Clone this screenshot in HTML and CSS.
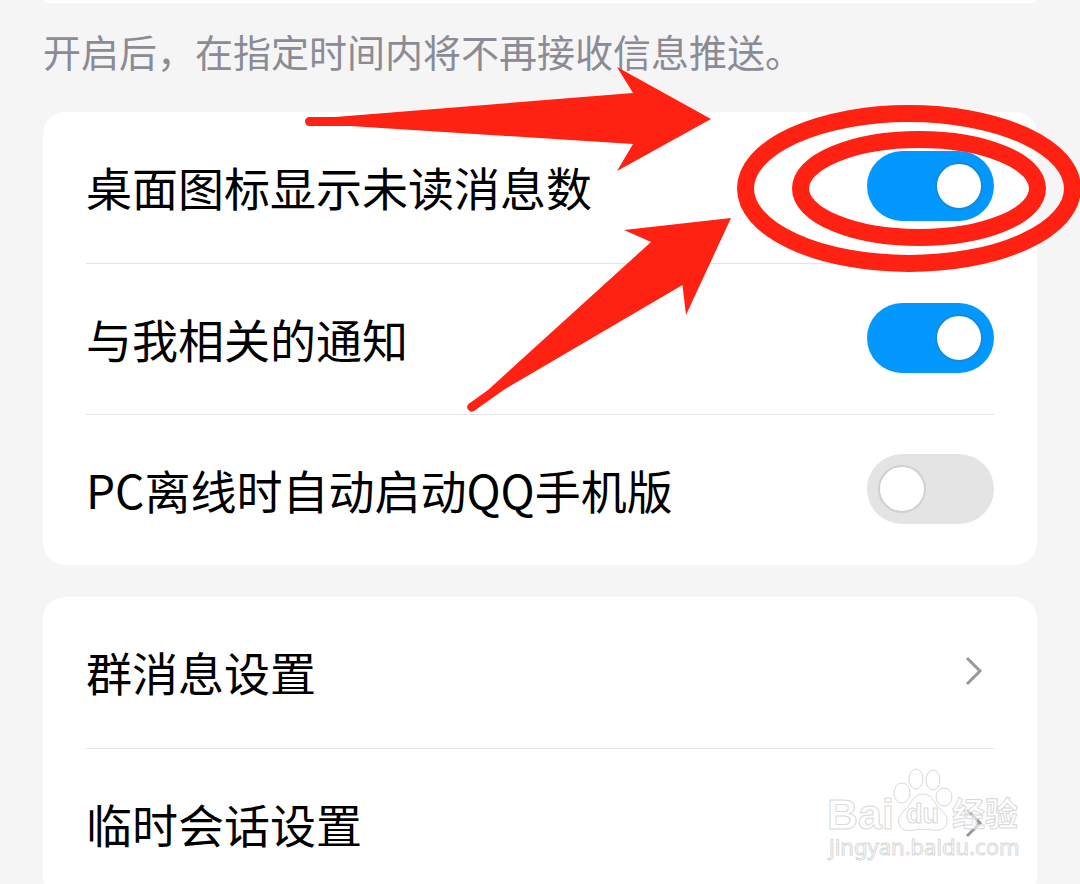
FILE: index.html
```html
<!DOCTYPE html>
<html lang="zh-CN">
<head>
<meta charset="utf-8">
<meta name="viewport" content="width=device-width, initial-scale=1">
<title>消息通知</title>
<link rel="stylesheet" href="styles.css">
</head>
<body>
<main class="page">
  <div class="card card-end"></div>
  <p class="note">开启后，在指定时间内将不再接收信息推送。</p>

  <section class="card">
    <div class="row">
      <label class="label" for="badge">桌面图标显示未读消息数</label>
      <input class="switch" type="checkbox" role="switch" id="badge" checked>
    </div>
    <div class="row">
      <label class="label" for="related">与我相关的通知</label>
      <input class="switch" type="checkbox" role="switch" id="related" checked>
    </div>
    <div class="row">
      <label class="label" for="offline">PC离线时自动启动QQ手机版</label>
      <input class="switch" type="checkbox" role="switch" id="offline">
    </div>
  </section>

  <section class="card card-next">
    <a class="row" href="#group">
      <span class="label">群消息设置</span>
      <svg class="chevron" viewBox="0 0 20 32" aria-hidden="true"><path d="M3 3 16 16 3 29"/></svg>
    </a>
    <a class="row" href="#temporary">
      <span class="label">临时会话设置</span>
      <svg class="chevron" viewBox="0 0 20 32" aria-hidden="true"><path d="M3 3 16 16 3 29"/></svg>
    </a>
  </section>

  <svg class="marks" viewBox="0 0 1080 884" aria-hidden="true">
    <path d="M309.500 117H335L633 93 617 67 711 119 617 171 633 144 350 126H309.500A4.500 4.500 0 0 1 309.500 117Z"/>
    <path d="M468.500 404 488 390 651 242 624 230 731 218 686 315 682.500 285 505 389 474 411A4.500 4.500 0 0 1 468.500 404Z"/>
    <ellipse class="ring" cx="909" cy="188.500" rx="163.500" ry="75"/>
    <ellipse class="ring" cx="919" cy="188.500" rx="118.500" ry="49"/>
  </svg>

  <svg class="watermark" viewBox="0 0 200 100" aria-hidden="true">
    <text class="brand" x="1" y="63">Bai</text>
    <ellipse cx="76" cy="27" rx="8" ry="10"/>
    <ellipse cx="90" cy="13" rx="7" ry="10"/>
    <ellipse cx="107" cy="14" rx="7" ry="10"/>
    <ellipse cx="118" cy="31" rx="8" ry="9"/>
    <path d="M97 28C88 28 86 36 80 43 75 48 71 52 73 58 75 65 82 65 88 64 94 63 101 63 107 64 114 65 120 63 121 56 122 49 117 46 112 41 107 34 105 28 97 28Z"/>
    <text class="du" x="80" y="57">du</text>
    <text class="exp" x="126" y="60">经验</text>
    <text class="site" x="3" y="89">jingyan.baidu.com</text>
  </svg>
</main>
</body>
</html>
```

FILE: styles.css
```css
*,
*::before { box-sizing: border-box; }

body {
  margin: 0;
  background: #f5f5f5;
  color: #000;
  font-family: "Noto Sans CJK SC", sans-serif;
}

.page {
  position: relative;
  height: 100vh;
  overflow: hidden;
  padding: 0 43px;
}

.card {
  padding: 0 43px;
  border-radius: 22px;
  background: #fff;
}

.card-end {
  height: 3px;
  border-radius: 0 0 22px 22px;
}

.card-next { margin-top: 32px; }

.note {
  margin: 0;
  padding: 20px 0 33px;
  color: #8b8b96;
  font-size: 38px;
  line-height: 56px;
}

.row {
  display: flex;
  align-items: center;
  justify-content: space-between;
  height: 151px;
  padding-bottom: 3px;
  color: inherit;
  text-decoration: none;
}

.row + .row { border-top: 1px solid #e3e3e3; }

.label {
  font-size: 46px;
  line-height: 68px;
}

.switch {
  appearance: none;
  display: flex;
  align-items: center;
  width: 127px;
  height: 70px;
  margin: 0;
  padding: 0 11px;
  border-radius: 35px;
  background: #e4e4e4;
}

.switch::before {
  content: "";
  width: 48px;
  height: 48px;
  border: 2px solid #d0d0d0;
  border-radius: 50%;
  background: #fff;
}

.switch:checked {
  justify-content: flex-end;
  background: #0398ff;
}

.switch:checked::before { border-color: #118bdf; }

.chevron {
  width: 20px;
  height: 32px;
  margin-right: 10px;
  fill: none;
  stroke: #999;
  stroke-width: 3;
}

.marks {
  position: absolute;
  top: 0;
  left: 0;
  width: 1080px;
  height: 884px;
  fill: #ff2112;
  pointer-events: none;
}

.ring {
  fill: none;
  stroke: #ff2112;
  stroke-width: 17;
}

.watermark {
  position: absolute;
  right: 54px;
  bottom: 18px;
  width: 200px;
  height: 100px;
  overflow: visible;
  fill: #fff;
  fill-opacity: 0.6;
  stroke: #d9d9d9;
  stroke-width: 1;
  pointer-events: none;
}

.brand { font: bold 43px "Liberation Sans", sans-serif; }
.du { font: bold 27px "Liberation Sans", sans-serif; }
.exp { font: bold 33px "Noto Sans CJK SC", sans-serif; }
.site { font: 22px "Noto Sans", sans-serif; }
```
